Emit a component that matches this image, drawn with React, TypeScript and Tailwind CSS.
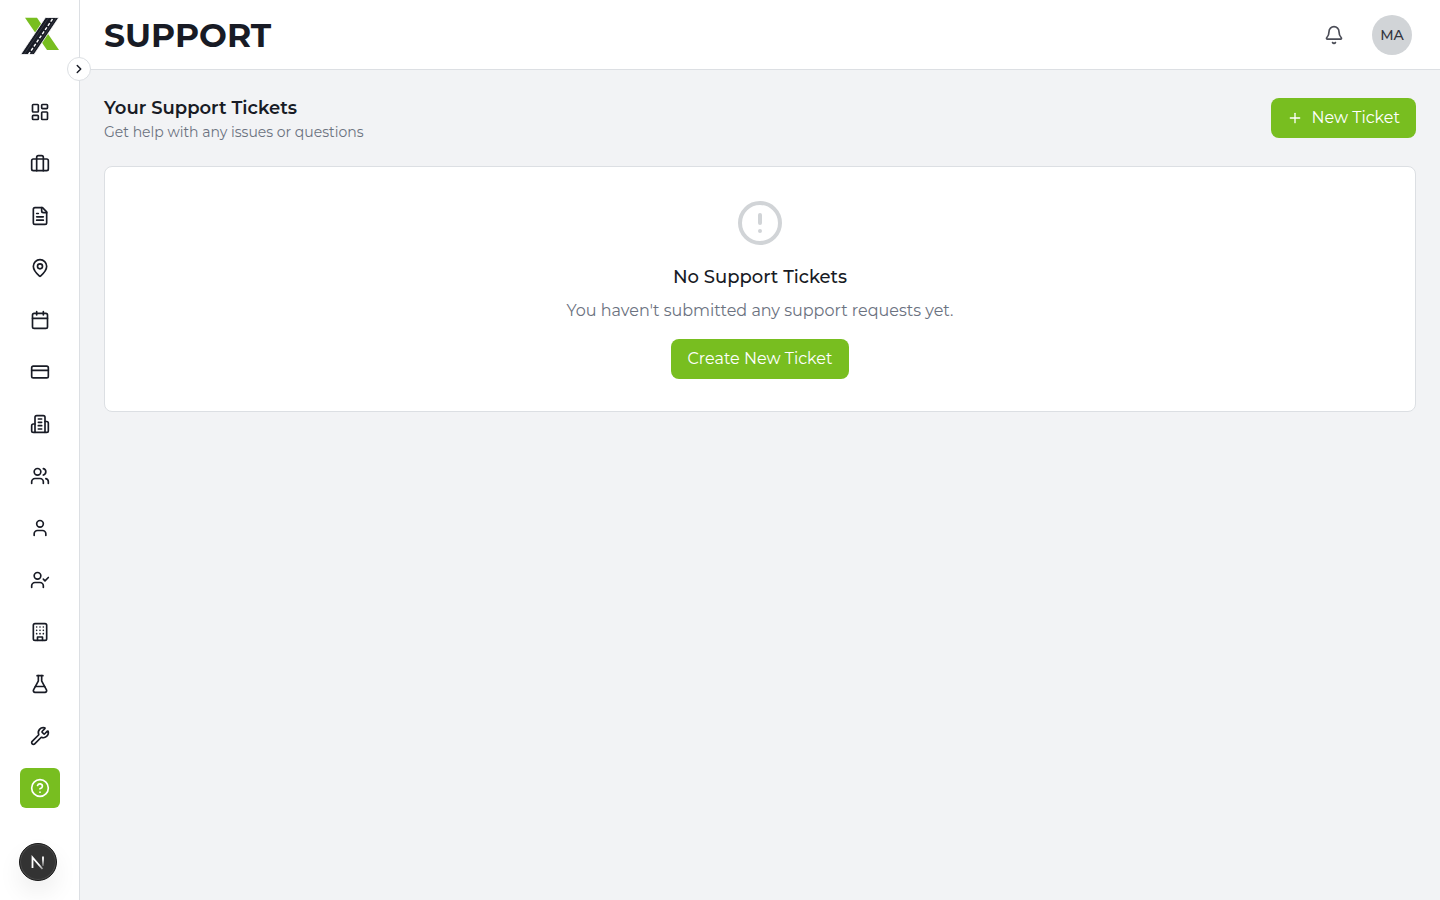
import { ReactNode } from 'react';
import {
  Bell,
  Briefcase,
  Calendar,
  ChevronRight,
  CircleAlert,
  CircleQuestionMark,
  CreditCard,
  FlaskConical,
  LayoutDashboard,
  MapPin,
  Plus,
  User,
  Users,
  Wrench,
} from 'lucide-react';

interface NavItem {
  label: string;
  icon: ReactNode;
  active?: boolean;
}

function StrokeIcon({ children }: { children: ReactNode }) {
  return (
    <svg
      className="w-5 h-5"
      viewBox="0 0 24 24"
      fill="none"
      stroke="currentColor"
      strokeWidth="2"
      strokeLinecap="round"
      strokeLinejoin="round"
    >
      {children}
    </svg>
  );
}

const NAV_ITEMS: NavItem[] = [
  { label: 'Dashboard', icon: <LayoutDashboard className="w-5 h-5" /> },
  { label: 'Jobs', icon: <Briefcase className="w-5 h-5" /> },
  {
    label: 'Documents',
    icon: (
      <StrokeIcon>
        <path d="M15 2H6a2 2 0 0 0-2 2v16a2 2 0 0 0 2 2h12a2 2 0 0 0 2-2V7Z" />
        <path d="M14 2v4a2 2 0 0 0 2 2h4" />
        <path d="M10 9H8M16 13H8M16 17H8" />
      </StrokeIcon>
    ),
  },
  { label: 'Locations', icon: <MapPin className="w-5 h-5" /> },
  { label: 'Calendar', icon: <Calendar className="w-5 h-5" /> },
  { label: 'Billing', icon: <CreditCard className="w-5 h-5" /> },
  {
    label: 'Companies',
    icon: (
      <StrokeIcon>
        <path d="M6 22V4a2 2 0 0 1 2-2h8a2 2 0 0 1 2 2v18Z" />
        <path d="M6 12H4a2 2 0 0 0-2 2v6a2 2 0 0 0 2 2h2" />
        <path d="M18 9h2a2 2 0 0 1 2 2v9a2 2 0 0 1-2 2h-2" />
        <path d="M10 6h4M10 10h4M10 14h4M10 18h4" />
      </StrokeIcon>
    ),
  },
  { label: 'Teams', icon: <Users className="w-5 h-5" /> },
  { label: 'Profile', icon: <User className="w-5 h-5" /> },
  {
    label: 'Approvals',
    icon: (
      <StrokeIcon>
        <path d="M16 21v-2a4 4 0 0 0-4-4H6a4 4 0 0 0-4 4v2" />
        <circle cx="9" cy="7" r="4" />
        <path d="m16 11 2 2 4-4" />
      </StrokeIcon>
    ),
  },
  {
    label: 'Offices',
    icon: (
      <StrokeIcon>
        <rect width="16" height="20" x="4" y="2" rx="2" />
        <path d="M9 22v-4h6v4" />
        <path d="M8 6h.01M12 6h.01M16 6h.01M8 10h.01M12 10h.01M16 10h.01M8 14h.01M12 14h.01M16 14h.01" />
      </StrokeIcon>
    ),
  },
  { label: 'Labs', icon: <FlaskConical className="w-5 h-5" /> },
  { label: 'Tools', icon: <Wrench className="w-5 h-5" /> },
  { label: 'Support', icon: <CircleQuestionMark className="w-5 h-5" />, active: true },
];

function Logo() {
  return (
    <svg className="w-10 h-10" viewBox="0 0 40 40">
      <path d="M5 2.700H17L39 35H27Z" fill="#78be20" />
      <path d="M25.500 2.500H38.800L14 39.500H0.700Z" fill="#181b25" stroke="#ffffff" strokeWidth="0.800" />
      <path d="M28.500 3 4 39.500M36 3 11.500 39.500" stroke="#ffffff" strokeWidth="0.400" opacity="0.300" />
      <path d="M32.500 4 8.500 39.500" stroke="#ffffff" strokeWidth="1.400" strokeDasharray="3.200 1.800" />
    </svg>
  );
}

function Sidebar() {
  return (
    <aside className="relative z-10 flex w-20 shrink-0 flex-col border-r border-[#dcdfe3] bg-white">
      <div className="flex h-[70px] items-center pl-5">
        <a href="#" aria-label="Home">
          <Logo />
        </a>
      </div>

      <button
        aria-label="Expand sidebar"
        className="absolute top-[57px] -right-3 flex h-6 w-6 items-center justify-center rounded-full border border-[#dcdfe3] bg-white text-[#181b25]"
      >
        <ChevronRight className="w-3.5 h-3.5" strokeWidth={2.5} />
      </button>

      <nav className="mt-[22px] flex flex-col gap-3 pl-5">
        {NAV_ITEMS.map((item) => (
          <a
            key={item.label}
            href="#"
            aria-label={item.label}
            className={`flex h-10 w-10 items-center justify-center rounded-md ${
              item.active ? 'bg-[#78be20] text-white' : 'text-[#181b25]'
            }`}
          >
            {item.icon}
          </a>
        ))}
      </nav>

      {/* Dev tools badge */}
      <button
        aria-label="Open dev tools"
        className="fixed bottom-[19px] left-[19px] flex h-[38px] w-[38px] items-center justify-center rounded-full border border-[#171717] bg-[#333333] shadow-[inset_0_0_0_1px_#4a4a4a,0_12px_24px_rgba(0,0,0,0.07)]"
      >
        <svg className="w-4 h-4" viewBox="0 0 16 16" fill="none">
          <defs>
            <linearGradient id="stem" x1="0" y1="5" x2="0" y2="14" gradientUnits="userSpaceOnUse">
              <stop stopColor="#ffffff" />
              <stop offset="1" stopColor="#ffffff" stopOpacity="0" />
            </linearGradient>
            <linearGradient id="slash" x1="10" y1="10" x2="14" y2="16" gradientUnits="userSpaceOnUse">
              <stop stopColor="#ffffff" />
              <stop offset="1" stopColor="#ffffff" stopOpacity="0.300" />
            </linearGradient>
          </defs>
          <path d="M2.500 14V3.500L12.500 15" stroke="url(#slash)" strokeWidth="1.800" />
          <path d="M13 2.500V12" stroke="url(#stem)" strokeWidth="1.800" />
        </svg>
      </button>
    </aside>
  );
}

function Header() {
  return (
    <header className="flex h-[70px] items-center justify-between border-b border-[#dcdfe3] bg-white pl-6 pr-7">
      <h1 className="text-[33px] leading-9 font-bold">SUPPORT</h1>
      <div className="flex items-center gap-7">
        <button aria-label="Notifications" className="text-[#4b4d57]">
          <Bell className="w-5 h-5" />
        </button>
        <button className="h-10 w-10 rounded-full bg-[#d1d4d7] text-sm font-medium text-[#33363f]">
          MA
        </button>
      </div>
    </header>
  );
}

export default function App() {
  return (
    <div className="flex min-h-screen bg-[#f2f3f5] font-['Montserrat','Inter',sans-serif] text-[#181b25] antialiased">
      <Sidebar />

      <div className="flex min-w-0 flex-1 flex-col">
        <Header />

        <main className="flex flex-col gap-6 p-6">
          <div className="flex items-center justify-between">
            <div>
              <h2 className="text-lg leading-7 font-semibold">Your Support Tickets</h2>
              <p className="text-sm leading-5 text-[#6b7280]">Get help with any issues or questions</p>
            </div>
            <button className="flex h-10 items-center gap-2 rounded-lg bg-[#78be20] px-4 text-base text-white">
              <Plus className="w-4 h-4" />
              New Ticket
            </button>
          </div>

          {/* Empty state */}
          <section className="flex flex-col items-center rounded-lg border border-[#dcdfe3] bg-white p-8">
            <CircleAlert className="mb-4 w-12 h-12 text-[#d1d4d7]" />
            <h3 className="mb-2 text-lg leading-7 font-medium">No Support Tickets</h3>
            <p className="mb-4 text-base leading-6 text-[#6b7280]">
              You haven't submitted any support requests yet.
            </p>
            <button className="h-10 rounded-lg bg-[#78be20] px-4 text-base text-white">
              Create New Ticket
            </button>
          </section>
        </main>
      </div>
    </div>
  );
}
